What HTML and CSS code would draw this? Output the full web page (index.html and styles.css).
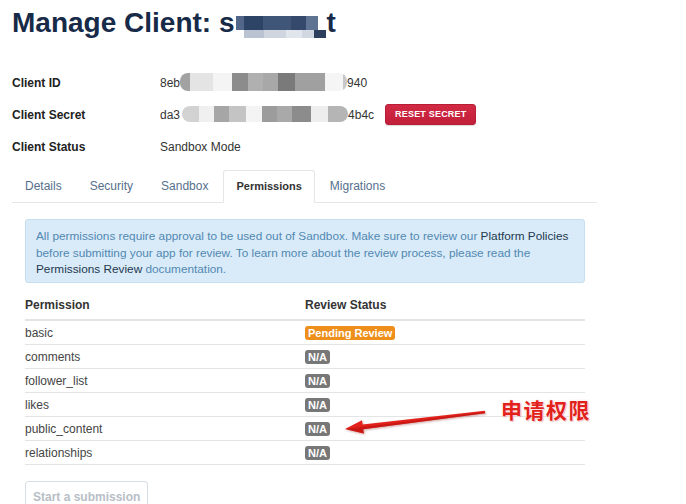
FILE: index.html
```html
<!DOCTYPE html>
<html lang="en">
<head>
<meta charset="utf-8">
<title>Manage Client</title>
<link rel="stylesheet" href="styles.css">
</head>
<body>
<div class="page">
  <h1 class="title">Manage Client: s<span class="blur-title"></span>t</h1>

  <dl class="info">
    <dt>Client ID</dt>
    <dd>8eb<span class="blur blur-id"></span>940</dd>
    <dt>Client Secret</dt>
    <dd>da3<span class="blur blur-secret"></span>4b4c<button class="btn-reset" type="button">RESET SECRET</button></dd>
    <dt>Client Status</dt>
    <dd>Sandbox Mode</dd>
  </dl>

  <ul class="tabs">
    <li><a href="#">Details</a></li>
    <li><a href="#">Security</a></li>
    <li><a href="#">Sandbox</a></li>
    <li class="active"><a href="#">Permissions</a></li>
    <li><a href="#">Migrations</a></li>
  </ul>

  <div class="pane">
    <div class="alert">All permissions require approval to be used out of Sandbox. Make sure to review our <a href="#">Platform Policies</a> before submitting your app for review. To learn more about the review process, please read the <a href="#">Permissions Review</a> documentation.</div>

    <table class="perm">
      <thead>
        <tr><th class="col-name">Permission</th><th>Review Status</th></tr>
      </thead>
      <tbody>
        <tr><td>basic</td><td><span class="badge badge-pending">Pending Review</span></td></tr>
        <tr><td>comments</td><td><span class="badge">N/A</span></td></tr>
        <tr><td>follower_list</td><td><span class="badge">N/A</span></td></tr>
        <tr><td>likes</td><td><span class="badge">N/A</span></td></tr>
        <tr><td>public_content</td><td><span class="badge">N/A</span></td></tr>
        <tr><td>relationships</td><td><span class="badge">N/A</span></td></tr>
      </tbody>
    </table>

    <button class="btn-submit" type="button" disabled>Start a submission</button>
  </div>
</div>

<svg class="arrow" width="686" height="504" viewBox="0 0 686 504" aria-hidden="true">
  <polygon points="345,429 363.8,433.4 363.2,429.2 485.2,413.2 484.8,410.8 362.6,424.4 362,420.2" fill="#e3211b"/>
  <polygon points="345,429 363.8,433.4 363.2,429.2 485.2,413.2 485,412 345,429" fill="#b5120f" opacity="0.55"/>
</svg>
<span class="note">申请权限</span>
</body>
</html>
```

FILE: styles.css
```css
html, body {
  margin: 0;
  padding: 0;
  background: #fff;
}

body {
  font-family: "Liberation Sans", Arial, sans-serif;
  font-size: 12px;
  color: #333;
}

.page {
  width: 585px;
  margin-left: 12px;
}

.title {
  margin: 3px 0 0;
  font-size: 28px;
  line-height: 40px;
  font-weight: bold;
  color: #172a48;
}

.blur-title {
  display: inline-block;
  width: 90px;
  height: 22px;
  vertical-align: -6px;
  margin-left: 2px;
  background:
    linear-gradient(to right, #52668a 0 8px, #2e4466 8px 27px, #405678 27px 55px, #34496b 55px 70px, #5f7393 70px 82px, #fff 82px 90px) top left / 100% 14px no-repeat,
    linear-gradient(to right, #fff 0 8px, #b9c3d1 8px 28px, #cfd6e0 28px 50px, #e1e6ec 50px 66px, #d2d8e1 66px 78px, #2c3f5c 78px 90px) bottom left / 100% 8px no-repeat;
}

.info {
  display: grid;
  grid-template-columns: 148px 1fr;
  margin: 24px 0 0;
  line-height: 32px;
}

.info dt {
  font-weight: bold;
  color: #222;
}

.info dd {
  margin: 0;
  color: #333;
  white-space: nowrap;
}

.blur {
  display: inline-block;
  vertical-align: middle;
  border-radius: 8px;
}

.blur-id {
  width: 167px;
  height: 18px;
  margin-top: -3px;
  background: linear-gradient(to right,
    #a2a2a2 0 10px, #e4e4e4 10px 33px, #f4f4f4 33px 52px, #8c8c8c 52px 68px,
    #b0b0b0 68px 83px, #a8a8a8 83px 98px, #7a7a7a 98px 115px, #a0a0a0 115px 145px,
    #f5f5f5 145px 163px, #c8c8c8 163px 167px);
}

.blur-secret {
  width: 166px;
  height: 16px;
  margin: -3px 0 0 2px;
  background: linear-gradient(to right,
    #d2d2d2 0 17px, #f0f0f0 17px 32px, #a6a6a6 32px 47px, #c4c4c4 47px 64px,
    #f4f4f4 64px 80px, #9c9c9c 80px 95px, #a9a9a9 95px 110px, #8c8c8c 110px 129px,
    #eeeeee 129px 146px, #b5b5b5 146px 166px);
}

.btn-reset {
  margin-left: 11px;
  height: 21px;
  padding: 0 9px;
  border: 1px solid #b81d36;
  border-radius: 3px;
  background: linear-gradient(#d22a45, #c11f3a);
  color: #fff;
  font-family: "Liberation Sans", Arial, sans-serif;
  font-size: 9px;
  font-weight: bold;
  letter-spacing: 0.2px;
  vertical-align: middle;
  margin-top: -3px;
  box-shadow: 0 1px 1px rgba(0, 0, 0, 0.15);
}

.tabs {
  display: flex;
  list-style: none;
  margin: 7px 0 0;
  padding: 0;
  border-bottom: 1px solid #e6e6e6;
}

.tabs li {
  margin-right: 2px;
  margin-bottom: -1px;
}

.tabs a {
  display: block;
  padding: 8px 12px;
  line-height: 15px;
  border: 1px solid transparent;
  border-radius: 3px 3px 0 0;
  color: #56708c;
  font-size: 12px;
  text-decoration: none;
}

.tabs .active a {
  color: #333;
  font-weight: bold;
  font-size: 11px;
  border-color: #e6e6e6 #e6e6e6 transparent;
  background: #fff;
}

.pane {
  padding: 16px 12px 0 13px;
}

.alert {
  border: 1px solid #c6dff0;
  border-radius: 3px;
  background: #d9ebf8;
  padding: 8px 8px 4px 10px;
  font-size: 11.8px;
  line-height: 16.5px;
  color: #5188b2;
  margin-bottom: 12px;
}

.alert a {
  color: #22384f;
  text-decoration: none;
}

.perm {
  width: 100%;
  border-collapse: collapse;
  font-size: 12px;
}

.perm th {
  text-align: left;
  font-weight: bold;
  color: #333;
  padding: 2px 0 6px;
  line-height: 16px;
  border-bottom: 2px solid #e4e4e4;
}

.perm .col-name {
  width: 280px;
}

.perm td {
  padding: 4px 0 3px;
  line-height: 16px;
  border-bottom: 1px solid #e4e4e4;
  color: #444;
}

.badge {
  display: inline-block;
  padding: 0 3px;
  line-height: 14px;
  border-radius: 3px;
  background: #777;
  color: #fff;
  font-size: 11px;
  font-weight: bold;
  vertical-align: middle;
}

.badge-pending {
  background: #ee8f1c;
}

.btn-submit {
  margin-top: 16px;
  padding: 7px 7px;
  border: 1px solid #d6dde6;
  border-radius: 3px;
  background: #fff;
  color: #b8bec6;
  font-family: "Liberation Sans", Arial, sans-serif;
  font-size: 12px;
  font-weight: bold;
  line-height: 16px;
}

.arrow {
  position: absolute;
  left: 0;
  top: 0;
  pointer-events: none;
  filter: drop-shadow(1px 1px 1px rgba(120, 0, 0, 0.35));
}

.note {
  position: absolute;
  left: 501px;
  top: 399px;
  font-family: "Noto Sans CJK SC", sans-serif;
  font-size: 21px;
  line-height: 21px;
  font-weight: bold;
  letter-spacing: 1.5px;
  color: #e3211b;
  text-shadow: 0 0 2px #fff, 0 0 3px #ffd0d0, 1px 1px 1px rgba(160, 0, 0, 0.3);
}
```
